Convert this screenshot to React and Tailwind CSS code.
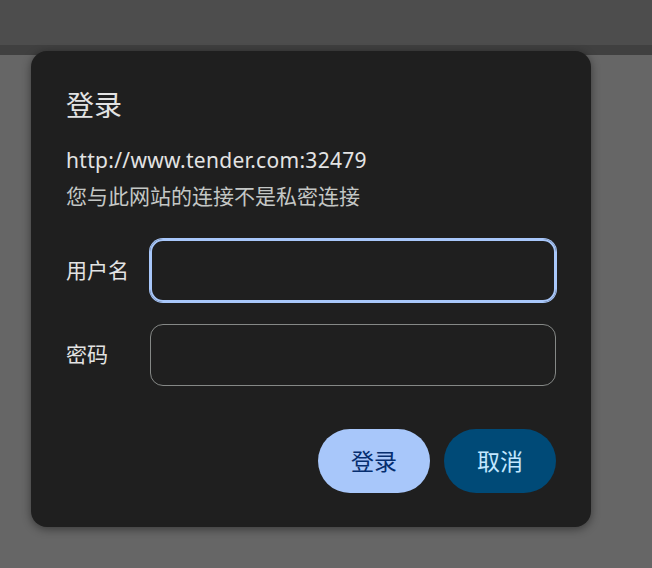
import React, { useState } from 'react';

const font = { fontFamily: '"Noto Sans", "Noto Sans CJK SC", sans-serif' };

const App = () => {
  const [username, setUsername] = useState('');
  const [password, setPassword] = useState('');

  return (
    <div className="relative min-h-[568px] bg-[#666666]" style={font}>
      <div className="h-[45px] bg-[#4d4d4d]" />
      <div className="h-[10px] bg-[#404040]" />

      <div className="absolute left-[31px] top-[51px] w-[560px] h-[476px] rounded-[16px] bg-[#1f1f1f] shadow-[0_2px_10px_rgba(0,0,0,0.45)] px-[35px] pt-[36px]">
        <h2 className="text-[28px] leading-[36px] text-[#e3e3e3]">登录</h2>
        <div className="mt-[19px] text-[21px] leading-[36px] tracking-[0.3px] text-[#e3e3e3]">http://www.tender.com:32479</div>
        <div className="text-[21px] leading-[36px] text-[#c4c7c5]">您与此网站的连接不是私密连接</div>

        <div className="mt-[25px] flex items-center">
          <label className="w-[84px] text-[21px] text-[#e3e3e3]">用户名</label>
          <input
            value={username}
            onChange={(e) => setUsername(e.target.value)}
            className="flex-1 h-[63px] rounded-[13px] border-2 border-[#a8c7fa] ring-1 ring-[#a8c7fa] bg-transparent px-4 text-[20px] text-[#e3e3e3] outline-none"
          />
        </div>
        <div className="mt-[22px] flex items-center">
          <label className="w-[84px] text-[21px] text-[#e3e3e3]">密码</label>
          <input
            type="password"
            value={password}
            onChange={(e) => setPassword(e.target.value)}
            className="flex-1 h-[62px] rounded-[13px] border-[1.5px] border-[#858886] bg-transparent px-4 text-[20px] text-[#e3e3e3] outline-none"
          />
        </div>

        <div className="mt-[43px] flex justify-end gap-[14px]">
          <button className="w-[112px] h-[64px] rounded-full bg-[#a8c7fa] text-[23px] text-[#062e6f]">登录</button>
          <button className="w-[112px] h-[64px] rounded-full bg-[#004a77] text-[23px] text-[#c2e7ff]">取消</button>
        </div>
      </div>
    </div>
  );
};

export default App;
